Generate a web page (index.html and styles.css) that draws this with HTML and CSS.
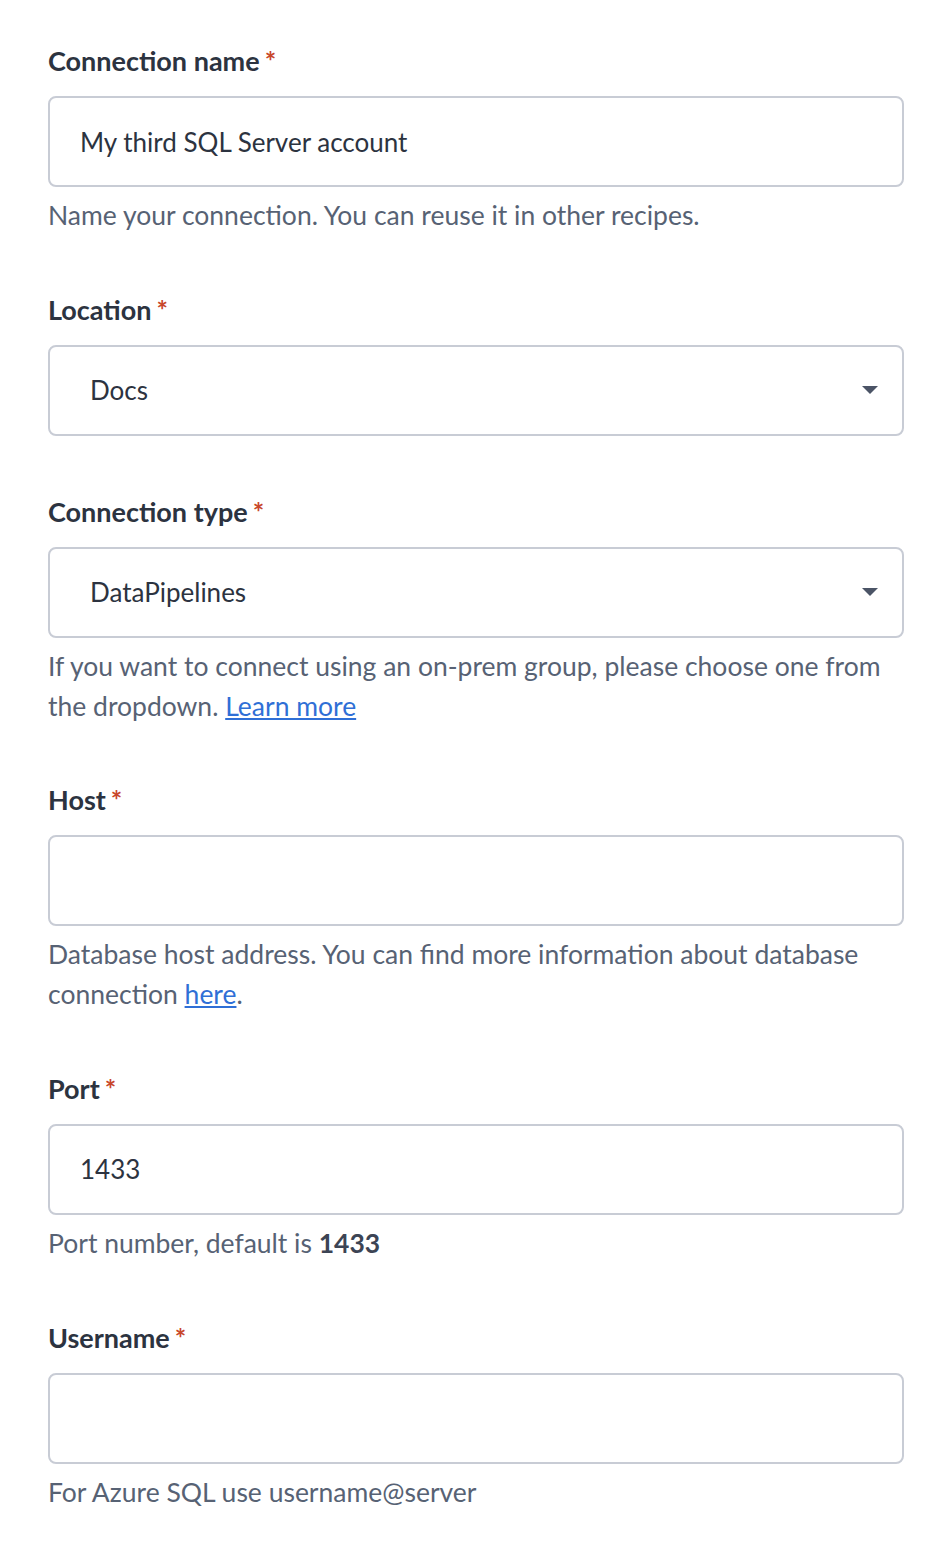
FILE: index.html
```html
<!DOCTYPE html>
<html lang="en">
<head>
<meta charset="utf-8">
<title>Connection</title>
<link rel="stylesheet" href="styles.css">
</head>
<body>
<form class="form">
  <div class="field">
    <label class="label">Connection name<span class="req">*</span></label>
    <div class="box"><span class="value">My third SQL Server account</span></div>
    <p class="help">Name your connection. You can reuse it in other recipes.</p>
  </div>
  <div class="field field-nohelp">
    <label class="label">Location<span class="req">*</span></label>
    <div class="box select"><span class="value">Docs</span><span class="caret"></span></div>
  </div>
  <div class="field">
    <label class="label">Connection type<span class="req">*</span></label>
    <div class="box select"><span class="value">DataPipelines</span><span class="caret"></span></div>
    <p class="help">If you want to connect using an on-prem group, please choose one from the dropdown. <a class="link" href="#">Learn more</a></p>
  </div>
  <div class="field">
    <label class="label">Host<span class="req">*</span></label>
    <div class="box"></div>
    <p class="help">Database host address. You can find more information about database connection <a class="link" href="#">here</a>.</p>
  </div>
  <div class="field">
    <label class="label">Port<span class="req">*</span></label>
    <div class="box"><span class="value">1433</span></div>
    <p class="help">Port number, default is <strong class="strong">1433</strong></p>
  </div>
  <div class="field">
    <label class="label">Username<span class="req">*</span></label>
    <div class="box"></div>
    <p class="help">For Azure SQL use username@server</p>
  </div>
</form>
</body>
</html>
```
FILE: styles.css
```css
html, body {
  margin: 0;
  padding: 0;
  background: #ffffff;
}
body {
  font-family: "Lato", "Liberation Sans", sans-serif;
  color: #2c3340;
}
.form {
  display: flex;
  flex-direction: column;
  gap: 54px;
  padding: 41px 48px 40px 48px;
}
.field {
  display: flex;
  flex-direction: column;
}
.field-nohelp {
  margin-bottom: 2px;
}
.label {
  display: block;
  font-size: 27px;
  font-weight: 700;
  line-height: 40px;
  color: #2c3340;
  margin-bottom: 15px;
}
.req {
  color: #c8462a;
  margin-left: 5px;
  font-size: 27px;
}
.box {
  box-sizing: border-box;
  height: 91px;
  border: 2px solid #c8ccd5;
  border-radius: 8px;
  display: flex;
  align-items: center;
  padding: 0 30px;
  background: #fff;
}
.box.select {
  padding: 0 24px 0 40px;
  justify-content: space-between;
}
.value {
  font-size: 26px;
  color: #2c3340;
}
.caret {
  width: 0;
  height: 0;
  border-left: 8px solid transparent;
  border-right: 8px solid transparent;
  border-top: 8px solid #4b5466;
}
.help {
  margin: 9px 0 0 0;
  font-size: 26.5px;
  line-height: 39.75px;
  color: #576274;
}
.link {
  color: #2f6fd6;
  text-decoration: underline;
}
.strong {
  font-weight: 700;
  color: #3c4454;
}
```
